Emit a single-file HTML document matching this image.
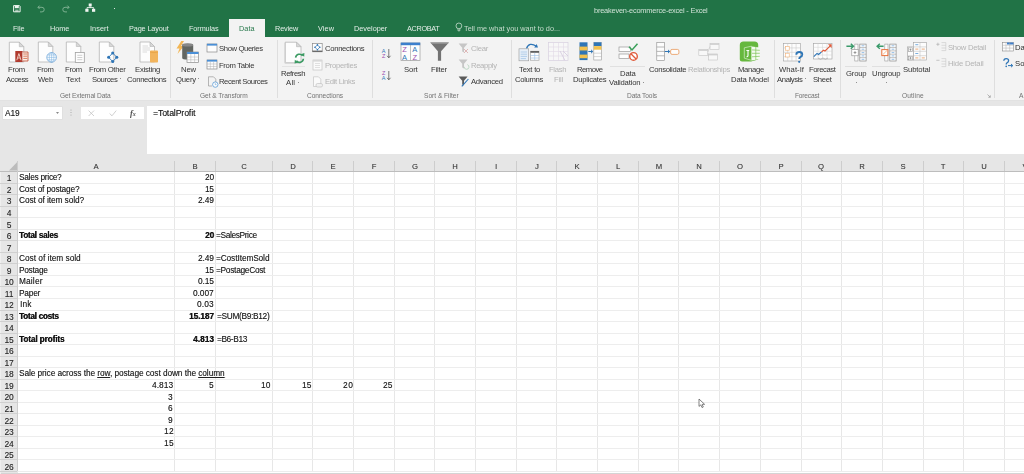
<!DOCTYPE html>
<html><head><meta charset="utf-8"><style>
html,body{margin:0;padding:0;width:1024px;height:474px;overflow:hidden;background:#fff;}
body{position:relative;font-family:'Liberation Sans', sans-serif;}
.t{position:absolute;white-space:nowrap;line-height:1;will-change:transform;}
.r{position:absolute;}
.s{position:absolute;overflow:visible;}
</style></head><body>
<div class="r" style="left:0px;top:0px;width:1024px;height:36.5px;background:#217346;"></div>
<svg class="s" style="left:12.5px;top:5px" width="8" height="7.5" viewBox="0 0 8 7.5"><path d="M0.6 0.6 H6.4 L7.1 1.3 V6.8 H0.6 Z" fill="none" stroke="#eef4f0" stroke-width="1"/><rect x="1.8" y="0.6" width="4" height="2.6" fill="#eef4f0"/><rect x="2.2" y="4.6" width="3.4" height="2.2" fill="#eef4f0" opacity=".6"/></svg>
<svg class="s" style="left:37px;top:5px" width="8" height="8" viewBox="0 0 8 8"><path d="M1 2.3 H5 Q7.2 2.3 7.2 4.6 Q7.2 6.9 5 6.9 H3" fill="none" stroke="#84b597" stroke-width="0.9"/><path d="M2.6 0.6 L0.9 2.3 L2.6 4" fill="none" stroke="#84b597" stroke-width="0.9"/></svg>
<svg class="s" style="left:62px;top:5px" width="8" height="8" viewBox="0 0 8 8"><path d="M7 2.3 H3 Q0.8 2.3 0.8 4.6 Q0.8 6.9 3 6.9 H5" fill="none" stroke="#84b597" stroke-width="0.9"/><path d="M5.4 0.6 L7.1 2.3 L5.4 4" fill="none" stroke="#84b597" stroke-width="0.9"/></svg>
<svg class="s" style="left:85.2px;top:3.3px" width="10.5" height="9.5" viewBox="0 0 10.5 9.5"><rect x="3.7" y="0.5" width="3" height="3" fill="#f0f5f2"/><rect x="0.3" y="5.8" width="3.2" height="3" fill="#f0f5f2"/><rect x="7" y="5.8" width="3.2" height="3" fill="#f0f5f2"/><path d="M5.2 3.5 V5 M2 5.8 V4.6 H8.6 V5.8" stroke="#f0f5f2" stroke-width="0.9" fill="none"/></svg>
<div class="r" style="left:114.4px;top:8.1px;width:1.1px;height:1.1px;background:#dfe9e3;"></div>
<div class="t" style="left:593.90px;top:6.63px;font-size:7.4px;color:#cfe2d6;font-weight:normal;font-family:'Liberation Sans', sans-serif;letter-spacing:-0.195px;">breakeven-ecommerce-excel - Excel</div>
<div class="t" style="left:13.20px;top:24.85px;font-size:7.3px;color:#e4eee8;font-weight:normal;font-family:'Liberation Sans', sans-serif;letter-spacing:-0.091px;">File</div>
<div class="t" style="left:50.30px;top:24.85px;font-size:7.3px;color:#e4eee8;font-weight:normal;font-family:'Liberation Sans', sans-serif;letter-spacing:-0.017px;">Home</div>
<div class="t" style="left:90.30px;top:24.85px;font-size:7.3px;color:#e4eee8;font-weight:normal;font-family:'Liberation Sans', sans-serif;letter-spacing:0.075px;">Insert</div>
<div class="t" style="left:129.20px;top:24.85px;font-size:7.3px;color:#e4eee8;font-weight:normal;font-family:'Liberation Sans', sans-serif;letter-spacing:-0.126px;">Page Layout</div>
<div class="t" style="left:189.30px;top:24.85px;font-size:7.3px;color:#e4eee8;font-weight:normal;font-family:'Liberation Sans', sans-serif;letter-spacing:-0.103px;">Formulas</div>
<div class="t" style="left:275.20px;top:24.85px;font-size:7.3px;color:#e4eee8;font-weight:normal;font-family:'Liberation Sans', sans-serif;letter-spacing:-0.123px;">Review</div>
<div class="t" style="left:318.20px;top:24.85px;font-size:7.3px;color:#e4eee8;font-weight:normal;font-family:'Liberation Sans', sans-serif;letter-spacing:0.078px;">View</div>
<div class="t" style="left:354.30px;top:24.85px;font-size:7.3px;color:#e4eee8;font-weight:normal;font-family:'Liberation Sans', sans-serif;letter-spacing:0.004px;">Developer</div>
<div class="t" style="left:407.40px;top:24.85px;font-size:7.3px;color:#e4eee8;font-weight:normal;font-family:'Liberation Sans', sans-serif;letter-spacing:-0.319px;">ACROBAT</div>
<div class="r" style="left:229px;top:19px;width:36px;height:18px;background:#f3f3f3;"></div>
<div class="t" style="left:239.20px;top:24.85px;font-size:7.3px;color:#2a7a4e;font-weight:normal;font-family:'Liberation Sans', sans-serif;letter-spacing:0.045px;">Data</div>
<svg class="s" style="left:455px;top:21.5px" width="8" height="11" viewBox="0 0 8 11"><circle cx="3.9" cy="3.9" r="2.9" fill="none" stroke="#c6dccd" stroke-width="0.8"/><path d="M3 6.6 V8.8 H4.8 V6.6" fill="none" stroke="#c6dccd" stroke-width="0.8"/></svg>
<div class="t" style="left:464.20px;top:24.85px;font-size:7.3px;color:#c6dccd;font-weight:normal;font-family:'Liberation Sans', sans-serif;letter-spacing:-0.004px;">Tell me what you want to do...</div>
<div class="r" style="left:0px;top:36.5px;width:1024px;height:63.5px;background:#f3f3f3;"></div>
<div class="r" style="left:0px;top:100px;width:1024px;height:55px;background:#e6e6e6;"></div>
<div class="r" style="left:0px;top:99.6px;width:1024px;height:0.6px;background:#e2e2e2;"></div>
<div class="r" style="left:170.2px;top:40px;width:0.9px;height:58px;background:#dedede;"></div>
<div class="r" style="left:276.7px;top:40px;width:0.9px;height:58px;background:#dedede;"></div>
<div class="r" style="left:372.2px;top:40px;width:0.9px;height:58px;background:#dedede;"></div>
<div class="r" style="left:511.4px;top:40px;width:0.9px;height:58px;background:#dedede;"></div>
<div class="r" style="left:773.6px;top:40px;width:0.9px;height:58px;background:#dedede;"></div>
<div class="r" style="left:839.5px;top:40px;width:0.9px;height:58px;background:#dedede;"></div>
<div class="r" style="left:994.3px;top:40px;width:0.9px;height:58px;background:#dedede;"></div>
<div class="t" style="left:59.80px;top:93.14px;font-size:6.6px;color:#727272;font-weight:normal;font-family:'Liberation Sans', sans-serif;letter-spacing:-0.113px;">Get External Data</div>
<div class="t" style="left:199.60px;top:93.14px;font-size:6.6px;color:#727272;font-weight:normal;font-family:'Liberation Sans', sans-serif;letter-spacing:-0.045px;">Get &amp; Transform</div>
<div class="t" style="left:306.50px;top:93.14px;font-size:6.6px;color:#727272;font-weight:normal;font-family:'Liberation Sans', sans-serif;letter-spacing:-0.060px;">Connections</div>
<div class="t" style="left:424.40px;top:93.14px;font-size:6.6px;color:#727272;font-weight:normal;font-family:'Liberation Sans', sans-serif;letter-spacing:-0.009px;">Sort &amp; Filter</div>
<div class="t" style="left:627.00px;top:93.14px;font-size:6.6px;color:#727272;font-weight:normal;font-family:'Liberation Sans', sans-serif;letter-spacing:-0.105px;">Data Tools</div>
<div class="t" style="left:794.50px;top:93.14px;font-size:6.6px;color:#727272;font-weight:normal;font-family:'Liberation Sans', sans-serif;letter-spacing:-0.182px;">Forecast</div>
<div class="t" style="left:901.70px;top:93.14px;font-size:6.6px;color:#727272;font-weight:normal;font-family:'Liberation Sans', sans-serif;letter-spacing:0.128px;">Outline</div>
<div class="t" style="left:1019.30px;top:93.14px;font-size:6.6px;color:#727272;font-weight:normal;font-family:'Liberation Sans', sans-serif;letter-spacing:0.000px;">A</div>
<svg class="s" style="left:8px;top:41px" width="22" height="23" viewBox="0 0 22 23"><path d="M1.3 1.2 H11.3 L15.8 5.7 V21.0 H1.3 Z" fill="#fdfdfd" stroke="#b4b4b4" stroke-width="0.8"/><path d="M11.3 1.2 V5.7 H15.8 Z" fill="#d8d8d8" stroke="#b4b4b4" stroke-width="0.6"/><rect x="7.3" y="10" width="7.3" height="11" fill="#b03a2e"/><path d="M14.6 11 H20 V20 H14.6" fill="#fbeee8" stroke="#c0492f" stroke-width="0.8"/><path d="M15.3 13 H19.3 M15.3 15.2 H19.3 M15.3 17.4 H19.3" stroke="#d0603a" stroke-width="0.8"/><path d="M8.8 19.2 L10.9 12.6 L13 19.2 M9.6 17 H12.2" fill="none" stroke="#f3d6cc" stroke-width="0.9"/></svg>
<div class="t" style="left:8.40px;top:65.80px;font-size:7.7px;color:#353535;font-weight:normal;font-family:'Liberation Sans', sans-serif;letter-spacing:-0.284px;">From</div>
<div class="t" style="left:5.50px;top:76.00px;font-size:7.7px;color:#353535;font-weight:normal;font-family:'Liberation Sans', sans-serif;letter-spacing:-0.414px;">Access</div>
<svg class="s" style="left:37px;top:41px" width="22" height="23" viewBox="0 0 22 23"><path d="M1.3 1 H11.3 L15.8 5.5 V21 H1.3 Z" fill="#fdfdfd" stroke="#b4b4b4" stroke-width="0.8"/><path d="M11.3 1 V5.5 H15.8 Z" fill="#d8d8d8" stroke="#b4b4b4" stroke-width="0.6"/><circle cx="14.6" cy="16.4" r="4.8" fill="#fbfdff" stroke="#5b9bd5" stroke-width="0.7"/><path d="M9.8 16.4 H19.4 M14.6 11.6 V21.2 M10.5 14 H18.7 M10.5 18.8 H18.7" stroke="#6aa5dc" stroke-width="0.45"/><ellipse cx="14.6" cy="16.4" rx="2.3" ry="4.8" fill="none" stroke="#6aa5dc" stroke-width="0.45"/></svg>
<div class="t" style="left:37.10px;top:65.80px;font-size:7.7px;color:#353535;font-weight:normal;font-family:'Liberation Sans', sans-serif;letter-spacing:-0.359px;">From</div>
<div class="t" style="left:38.00px;top:76.00px;font-size:7.7px;color:#353535;font-weight:normal;font-family:'Liberation Sans', sans-serif;letter-spacing:-0.257px;">Web</div>
<svg class="s" style="left:65px;top:41px" width="22" height="23" viewBox="0 0 22 23"><path d="M1.3 1 H11.3 L15.8 5.5 V21 H1.3 Z" fill="#fdfdfd" stroke="#b4b4b4" stroke-width="0.8"/><path d="M11.3 1 V5.5 H15.8 Z" fill="#d8d8d8" stroke="#b4b4b4" stroke-width="0.6"/><rect x="10.3" y="11.5" width="9" height="10" fill="#fdfdfd" stroke="#a0a0a0" stroke-width="0.8"/><path d="M12.3 14.3 H17.3 M12.3 16.5 H17.3 M12.3 18.7 H17.3" stroke="#b0b0b0" stroke-width="0.6"/></svg>
<div class="t" style="left:65.20px;top:65.80px;font-size:7.7px;color:#353535;font-weight:normal;font-family:'Liberation Sans', sans-serif;letter-spacing:-0.284px;">From</div>
<div class="t" style="left:65.80px;top:76.00px;font-size:7.7px;color:#353535;font-weight:normal;font-family:'Liberation Sans', sans-serif;letter-spacing:0.073px;">Text</div>
<svg class="s" style="left:98px;top:41px" width="22" height="23" viewBox="0 0 22 23"><path d="M1.3 1 H11.3 L15.8 5.5 V21 H1.3 Z" fill="#fdfdfd" stroke="#b4b4b4" stroke-width="0.8"/><path d="M11.3 1 V5.5 H15.8 Z" fill="#d8d8d8" stroke="#b4b4b4" stroke-width="0.6"/><path d="M14.7 12 L18.8 16.3 L14.7 20.6 L10.6 16.3 Z" fill="none" stroke="#2e75b6" stroke-width="0.9"/><circle cx="14.7" cy="12" r="1.5" fill="#2e75b6"/><circle cx="18.8" cy="16.3" r="1.5" fill="#2e75b6"/><circle cx="14.7" cy="20.6" r="1.5" fill="#2e75b6"/><circle cx="10.6" cy="16.3" r="1.5" fill="#2e75b6"/></svg>
<div class="t" style="left:88.80px;top:65.80px;font-size:7.7px;color:#353535;font-weight:normal;font-family:'Liberation Sans', sans-serif;letter-spacing:-0.281px;">From Other</div>
<div class="t" style="left:92.10px;top:76.00px;font-size:7.7px;color:#353535;font-weight:normal;font-family:'Liberation Sans', sans-serif;letter-spacing:-0.400px;">Sources</div>
<div class="r" style="left:120.2px;top:78.1px;width:1.3px;height:1.3px;background:#707070;border-radius:1px"></div>
<svg class="s" style="left:139px;top:41px" width="22" height="23" viewBox="0 0 22 23"><path d="M1 1 H11.0 L15.5 5.5 V21 H1 Z" fill="#fdfdfd" stroke="#b4b4b4" stroke-width="0.8"/><path d="M11.0 1 V5.5 H15.5 Z" fill="#d8d8d8" stroke="#b4b4b4" stroke-width="0.6"/><path d="M3.5 5 H9 M3.5 7 H11 M3.5 9 H11 M3.5 11 H8" stroke="#c8c8c8" stroke-width="0.6"/><rect x="11" y="9.5" width="8" height="12" rx="0.8" fill="#f2b45c"/><path d="M11 11 Q15 12.3 19 11" fill="none" stroke="#e39a3a" stroke-width="0.6"/></svg>
<div class="t" style="left:134.50px;top:65.80px;font-size:7.7px;color:#353535;font-weight:normal;font-family:'Liberation Sans', sans-serif;letter-spacing:-0.240px;">Existing</div>
<div class="t" style="left:127.40px;top:76.00px;font-size:7.7px;color:#353535;font-weight:normal;font-family:'Liberation Sans', sans-serif;letter-spacing:-0.314px;">Connections</div>
<svg class="s" style="left:175px;top:40px" width="25" height="24" viewBox="0 0 25 24"><path d="M6.3 1 L1.5 8.5 L4.5 8.5 L2.5 14 L9 6 L6 6 L9 1 Z" fill="#f2b655"/><path d="M7.2 5 Q7.2 3.6 12.7 3.6 Q18.2 3.6 18.2 5 V18 Q18.2 19.6 12.7 19.6 Q7.2 19.6 7.2 18 Z" fill="#626662"/><ellipse cx="12.7" cy="5" rx="5.5" ry="1.5" fill="#888"/><rect x="12" y="12" width="11.5" height="10.5" fill="#fdfdfd" stroke="#8a8a8a" stroke-width="0.7"/><rect x="12" y="12" width="11.5" height="2" fill="#4a8fd6"/><path d="M12 17 H23.5 M12 19.8 H23.5 M15.8 14 V22.5 M19.6 14 V22.5" stroke="#b0b0b0" stroke-width="0.5"/></svg>
<div class="t" style="left:180.50px;top:65.80px;font-size:7.7px;color:#353535;font-weight:normal;font-family:'Liberation Sans', sans-serif;letter-spacing:-0.164px;">New</div>
<div class="t" style="left:175.50px;top:76.00px;font-size:7.7px;color:#353535;font-weight:normal;font-family:'Liberation Sans', sans-serif;letter-spacing:-0.207px;">Query</div>
<div class="r" style="left:197.6px;top:78.2px;width:1.3px;height:1.3px;background:#707070;border-radius:1px"></div>
<svg class="s" style="left:206px;top:42.5px" width="12" height="10" viewBox="0 0 12 10"><rect x="1" y="1" width="10" height="8" fill="#fdfdfd" stroke="#8a8a8a" stroke-width="0.7"/><rect x="1" y="0.8" width="10" height="1.8" fill="#4a8fd6"/></svg>
<div class="t" style="left:219.30px;top:45.40px;font-size:7.7px;color:#353535;font-weight:normal;font-family:'Liberation Sans', sans-serif;letter-spacing:-0.383px;">Show Queries</div>
<svg class="s" style="left:206px;top:58.5px" width="12" height="11" viewBox="0 0 12 11"><rect x="1" y="1" width="10" height="9" fill="#fdfdfd" stroke="#8a8a8a" stroke-width="0.7"/><rect x="1" y="0.8" width="10" height="1.8" fill="#4a8fd6"/><path d="M1 5 H11 M1 7.5 H11 M4.3 2.6 V10 M7.6 2.6 V10" stroke="#b0b0b0" stroke-width="0.5"/></svg>
<div class="t" style="left:219.30px;top:61.90px;font-size:7.7px;color:#353535;font-weight:normal;font-family:'Liberation Sans', sans-serif;letter-spacing:-0.321px;">From Table</div>
<svg class="s" style="left:207px;top:75.5px" width="12" height="12" viewBox="0 0 12 12"><path d="M1.5 0.8 H6.5 L8.8 3.1 V6.3" fill="none" stroke="#9a9a9a" stroke-width="0.7"/><path d="M1.5 0.8 V10 H5" fill="none" stroke="#9a9a9a" stroke-width="0.7"/><circle cx="8.3" cy="8.6" r="2.7" fill="#fdfdfd" stroke="#5b9bd5" stroke-width="0.8"/><path d="M8.3 7.2 V8.7 H9.5" stroke="#5b9bd5" stroke-width="0.6" fill="none"/></svg>
<div class="t" style="left:219.40px;top:78.40px;font-size:7.7px;color:#353535;font-weight:normal;font-family:'Liberation Sans', sans-serif;letter-spacing:-0.450px;">Recent Sources</div>
<svg class="s" style="left:284px;top:41px" width="22" height="24" viewBox="0 0 22 24"><path d="M1.2 1.2 H12.5 L17.0 5.7 V21.8 H1.2 Z" fill="#fdfdfd" stroke="#b4b4b4" stroke-width="0.8"/><path d="M12.5 1.2 V5.7 H17.0 Z" fill="#d8d8d8" stroke="#b4b4b4" stroke-width="0.6"/><path d="M1.2 2 V21.8 H15" fill="none" stroke="#cfcfcf" stroke-width="1.2"/><path d="M11.6 16.6 A3.9 3.9 0 0 1 18.6 14.8" fill="none" stroke="#3a9a62" stroke-width="1.6"/><path d="M19.4 17.8 A3.9 3.9 0 0 1 12.4 19.8" fill="none" stroke="#3a9a62" stroke-width="1.6"/><path d="M16.8 13.2 L20.2 15.8 L20.4 12 Z M14.2 21.4 L10.8 18.8 L10.6 22.6 Z" fill="#3a9a62"/></svg>
<div class="r" style="left:282px;top:66px;width:23px;height:0.8px;background:#e4e4e4;"></div>
<div class="t" style="left:281.40px;top:69.80px;font-size:7.7px;color:#353535;font-weight:normal;font-family:'Liberation Sans', sans-serif;letter-spacing:-0.403px;">Refresh</div>
<div class="t" style="left:286.20px;top:79.30px;font-size:7.7px;color:#353535;font-weight:normal;font-family:'Liberation Sans', sans-serif;letter-spacing:0.251px;">All</div>
<div class="r" style="left:297.9px;top:81.6px;width:1.3px;height:1.3px;background:#707070;border-radius:1px"></div>
<svg class="s" style="left:311.8px;top:42.8px" width="11" height="10" viewBox="0 0 11 10"><rect x="0.6" y="0.6" width="9.6" height="7.4" fill="#fdfdfd" stroke="#8a8a8a" stroke-width="0.7"/><rect x="0.3" y="7.8" width="10.2" height="1.3" fill="#6a6a6a"/><path d="M5.4 1.9 L7.8 4.3 L5.4 6.7 L3 4.3 Z" fill="none" stroke="#2e75b6" stroke-width="0.7"/><circle cx="5.4" cy="1.9" r=".8" fill="#2e75b6"/><circle cx="7.8" cy="4.3" r=".8" fill="#2e75b6"/><circle cx="5.4" cy="6.7" r=".8" fill="#2e75b6"/><circle cx="3" cy="4.3" r=".8" fill="#2e75b6"/></svg>
<div class="t" style="left:324.50px;top:45.40px;font-size:7.7px;color:#353535;font-weight:normal;font-family:'Liberation Sans', sans-serif;letter-spacing:-0.314px;">Connections</div>
<svg class="s" style="left:312px;top:58.5px" width="11" height="12" viewBox="0 0 11 12"><rect x="1" y="1" width="9" height="10" fill="#fafafa" stroke="#c4c4c4" stroke-width="0.7"/><rect x="1" y="1" width="9" height="1.6" fill="#d8d8d8"/><path d="M3 4.5 H8 M3 6.5 H8 M3 8.5 H8" stroke="#cfcfcf" stroke-width="0.6"/></svg>
<div class="t" style="left:324.50px;top:61.90px;font-size:7.7px;color:#b4b4b4;font-weight:normal;font-family:'Liberation Sans', sans-serif;letter-spacing:-0.305px;">Properties</div>
<svg class="s" style="left:312px;top:75.5px" width="12" height="12" viewBox="0 0 12 12"><path d="M1.5 0.8 H6.5 L8.8 3.1 V10.5 H1.5 Z" fill="#fafafa" stroke="#c4c4c4" stroke-width="0.7"/><rect x="4" y="7.5" width="6.5" height="3.5" rx="1.5" fill="#f0f0f0" stroke="#bcbcbc" stroke-width="0.6"/></svg>
<div class="t" style="left:324.50px;top:78.40px;font-size:7.7px;color:#b4b4b4;font-weight:normal;font-family:'Liberation Sans', sans-serif;letter-spacing:-0.334px;">Edit Links</div>
<svg class="s" style="left:381px;top:48px" width="12" height="11" viewBox="0 0 12 11"><text x="0.8" y="5" font-size="5.5" fill="#2e75b6" font-family="Liberation Sans">A</text><text x="1" y="10" font-size="5.5" fill="#9b4fb0" font-family="Liberation Sans">Z</text><path d="M7.8 1 V9.6 M6.1 7.8 L7.8 9.8 L9.5 7.8" fill="none" stroke="#555" stroke-width="0.8"/></svg>
<svg class="s" style="left:381px;top:69.5px" width="12" height="11" viewBox="0 0 12 11"><text x="1" y="5" font-size="5.5" fill="#9b4fb0" font-family="Liberation Sans">Z</text><text x="0.8" y="10" font-size="5.5" fill="#2e75b6" font-family="Liberation Sans">A</text><path d="M7.8 1 V9.6 M6.1 7.8 L7.8 9.8 L9.5 7.8" fill="none" stroke="#555" stroke-width="0.8"/></svg>
<svg class="s" style="left:400px;top:42px" width="21" height="19" viewBox="0 0 21 19"><rect x="1" y="1" width="19" height="17.5" fill="#fdfdfd" stroke="#9a9a9a" stroke-width="0.7"/><rect x="0.8" y="0.6" width="19.4" height="2.6" fill="#3d7fcc"/><path d="M10.5 3 V18.5" stroke="#9a9a9a" stroke-width="0.6"/><text x="2.2" y="10" font-size="7.5" fill="#9b4fb0" font-family="Liberation Sans">Z</text><text x="2" y="17.5" font-size="7.5" fill="#2e75b6" font-family="Liberation Sans">A</text><text x="12.2" y="10" font-size="7.5" fill="#2e75b6" font-family="Liberation Sans">A</text><text x="12.6" y="17.5" font-size="7.5" fill="#9b4fb0" font-family="Liberation Sans">Z</text></svg>
<div class="t" style="left:403.50px;top:65.80px;font-size:7.7px;color:#353535;font-weight:normal;font-family:'Liberation Sans', sans-serif;letter-spacing:-0.127px;">Sort</div>
<svg class="s" style="left:429.5px;top:41.8px" width="20" height="20" viewBox="0 0 20 20"><path d="M0.3 0.4 H18.9 L11.1 9.3 V18.8 L7.9 18.8 V9.3 Z" fill="#737373"/><path d="M0.3 0.4 H18.9 L17.8 1.8 H1.4 Z" fill="#9a9a9a"/></svg>
<div class="t" style="left:431.00px;top:65.80px;font-size:7.7px;color:#353535;font-weight:normal;font-family:'Liberation Sans', sans-serif;letter-spacing:-0.182px;">Filter</div>
<svg class="s" style="left:458px;top:42.5px" width="11" height="11" viewBox="0 0 11 11"><path d="M0.6 0.5 H9.6 L6 4.8 V9.5 L4.2 8.6 V4.8 Z" fill="#c6c6c6"/><path d="M6 6 L10 10 M10 6 L6 10" stroke="#d8a8a8" stroke-width="0.8"/></svg>
<div class="t" style="left:470.50px;top:45.40px;font-size:7.7px;color:#b4b4b4;font-weight:normal;font-family:'Liberation Sans', sans-serif;letter-spacing:-0.295px;">Clear</div>
<svg class="s" style="left:458px;top:58.5px" width="11" height="12" viewBox="0 0 11 12"><path d="M0.6 0.5 H9.6 L6 4.8 V9.5 L4.2 8.6 V4.8 Z" fill="#c6c6c6"/><path d="M6.2 7.8 A2.4 2.4 0 1 0 9.3 5.6" fill="none" stroke="#b8d4bf" stroke-width="0.9"/></svg>
<div class="t" style="left:470.50px;top:61.90px;font-size:7.7px;color:#b4b4b4;font-weight:normal;font-family:'Liberation Sans', sans-serif;letter-spacing:-0.360px;">Reapply</div>
<svg class="s" style="left:458px;top:75.5px" width="11" height="11" viewBox="0 0 11 11"><path d="M0.6 0.5 H9.6 L6 4.8 V9.5 L4.2 8.6 V4.8 Z" fill="#5a5a5a"/><path d="M3.8 10.3 L10.4 3" stroke="#2e75b6" stroke-width="1.1"/></svg>
<div class="t" style="left:470.50px;top:78.40px;font-size:7.7px;color:#353535;font-weight:normal;font-family:'Liberation Sans', sans-serif;letter-spacing:-0.300px;">Advanced</div>
<svg class="s" style="left:518px;top:41.5px" width="23" height="20" viewBox="0 0 23 20"><path d="M8.5 6.5 Q11 -0.5 18.5 4.2" fill="none" stroke="#2e75b6" stroke-width="1.3"/><path d="M16.2 5.6 L20 5.6 L18.7 1.9 Z" fill="#2e75b6"/><rect x="1" y="6.8" width="9.7" height="12" fill="#e6eff8" stroke="#9a9a9a" stroke-width="0.6"/><path d="M2.7 10 H9 M2.7 12.2 H9 M2.7 14.4 H9 M2.7 16.6 H8" stroke="#9cc0e4" stroke-width="0.7"/><rect x="12.5" y="9.2" width="8.5" height="9" fill="#fdfdfd" stroke="#9a9a9a" stroke-width="0.6"/><rect x="12.5" y="9" width="8.5" height="1.8" fill="#606060"/><path d="M12.5 13.5 H21 M12.5 16 H21 M16.7 10.8 V18.2" stroke="#9cc0e4" stroke-width="0.6"/></svg>
<div class="t" style="left:518.60px;top:65.80px;font-size:7.7px;color:#353535;font-weight:normal;font-family:'Liberation Sans', sans-serif;letter-spacing:-0.208px;">Text to</div>
<div class="t" style="left:514.60px;top:76.00px;font-size:7.7px;color:#353535;font-weight:normal;font-family:'Liberation Sans', sans-serif;letter-spacing:-0.321px;">Columns</div>
<svg class="s" style="left:548px;top:42px" width="21" height="19" viewBox="0 0 21 19"><rect x="0.5" y="0.5" width="19.5" height="18" fill="#f7f7f7" stroke="#d8d0e0" stroke-width="0.7"/><path d="M0.5 5 H20 M0.5 9.5 H20 M0.5 14 H20 M5.5 0.5 V18.5 M10.5 0.5 V18.5 M15.5 0.5 V18.5" stroke="#e0d8e6" stroke-width="0.6"/><path d="M12 9 L17 18.5 M15 9 L20 14" stroke="#d6cde0" stroke-width="0.9"/></svg>
<div class="t" style="left:549.30px;top:65.80px;font-size:7.7px;color:#b4b4b4;font-weight:normal;font-family:'Liberation Sans', sans-serif;letter-spacing:-0.322px;">Flash</div>
<div class="t" style="left:553.50px;top:76.00px;font-size:7.7px;color:#b4b4b4;font-weight:normal;font-family:'Liberation Sans', sans-serif;letter-spacing:-0.207px;">Fill</div>
<svg class="s" style="left:578.5px;top:42.3px" width="23" height="18.5" viewBox="0 0 23 18.5"><rect x="0.5" y="0.3" width="8" height="17.8" fill="#2e75b6"/><rect x="0.5" y="4.6" width="8" height="3.6" fill="#f2c14e"/><rect x="0.5" y="12.6" width="8" height="3.6" fill="#f2c14e"/><path d="M0.5 8.6 H8.5" stroke="#f2c14e" stroke-width="0.4"/><rect x="14.8" y="0.6" width="7.6" height="17.4" fill="#fdfdfd" stroke="#9a9a9a" stroke-width="0.6"/><rect x="14.8" y="0.3" width="7.6" height="3.8" fill="#2e75b6"/><rect x="14.8" y="4.1" width="7.6" height="3.6" fill="#f2c14e"/><path d="M14.8 11.2 H22.4 M14.8 14.6 H22.4" stroke="#b0b0b0" stroke-width="0.5"/><path d="M9.3 9.5 H13.5 M12 7.8 L13.8 9.5 L12 11.2" fill="none" stroke="#2e75b6" stroke-width="1"/></svg>
<div class="t" style="left:577.20px;top:65.80px;font-size:7.7px;color:#353535;font-weight:normal;font-family:'Liberation Sans', sans-serif;letter-spacing:-0.507px;">Remove</div>
<div class="t" style="left:573.20px;top:76.00px;font-size:7.7px;color:#353535;font-weight:normal;font-family:'Liberation Sans', sans-serif;letter-spacing:-0.261px;">Duplicates</div>
<svg class="s" style="left:617.5px;top:42.5px" width="21" height="19" viewBox="0 0 21 19"><rect x="1" y="4" width="11.5" height="4.5" fill="#fdfdfd" stroke="#8a8a8a" stroke-width="0.6"/><rect x="1" y="11" width="10" height="4.5" fill="#fdfdfd" stroke="#8a8a8a" stroke-width="0.6"/><path d="M11 3.8 L14 7 L19.5 0.7" fill="none" stroke="#3aa05a" stroke-width="1.5"/><circle cx="15.5" cy="13.4" r="3.8" fill="#fff" stroke="#e05a3a" stroke-width="1.4"/><path d="M12.9 10.8 L18.1 16" stroke="#e05a3a" stroke-width="1.3"/></svg>
<div class="r" style="left:610.3px;top:66.0px;width:34.5px;height:0.8px;background:#e0e0e0;"></div>
<div class="t" style="left:619.70px;top:69.80px;font-size:7.7px;color:#353535;font-weight:normal;font-family:'Liberation Sans', sans-serif;letter-spacing:-0.163px;">Data</div>
<div class="t" style="left:609.10px;top:79.30px;font-size:7.7px;color:#353535;font-weight:normal;font-family:'Liberation Sans', sans-serif;letter-spacing:-0.180px;">Validation</div>
<div class="r" style="left:643px;top:82.2px;width:1.3px;height:1.3px;background:#707070;border-radius:1px"></div>
<svg class="s" style="left:655.5px;top:41.5px" width="24" height="19" viewBox="0 0 24 19"><rect x="0.8" y="0.5" width="7.5" height="17.8" fill="#fdfdfd" stroke="#8a8a8a" stroke-width="0.6"/><path d="M0.8 5 H8.3 M0.8 9.4 H8.3 M0.8 13.8 H8.3" stroke="#8a8a8a" stroke-width="0.6"/><path d="M8.7 9.5 H13.5 M12 7.9 L13.7 9.5 L12 11.1" fill="none" stroke="#2e75b6" stroke-width="1"/><rect x="14.6" y="7.4" width="8.3" height="5" rx="1.5" fill="#fdfdfd" stroke="#e8985a" stroke-width="0.8"/></svg>
<div class="t" style="left:648.50px;top:65.80px;font-size:7.7px;color:#353535;font-weight:normal;font-family:'Liberation Sans', sans-serif;letter-spacing:-0.310px;">Consolidate</div>
<svg class="s" style="left:697.5px;top:42.5px" width="22" height="18" viewBox="0 0 22 18"><rect x="12" y="0.5" width="9" height="6" fill="#f8f8f8" stroke="#c4c4c4" stroke-width="0.6"/><rect x="12" y="0.5" width="9" height="1.4" fill="#d0d0d0"/><rect x="0.8" y="6.5" width="9" height="6" fill="#f8f8f8" stroke="#c4c4c4" stroke-width="0.6"/><rect x="0.8" y="6.5" width="9" height="1.4" fill="#d0d0d0"/><rect x="10.5" y="11" width="9" height="6" fill="#f8f8f8" stroke="#c4c4c4" stroke-width="0.6"/><rect x="10.5" y="11" width="9" height="1.4" fill="#d0d0d0"/><path d="M9.8 9 L12 3.5 M9.8 10 L10.5 13.5" stroke="#c4c4c4" stroke-width="0.6"/></svg>
<div class="t" style="left:687.50px;top:65.80px;font-size:7.7px;color:#b4b4b4;font-weight:normal;font-family:'Liberation Sans', sans-serif;letter-spacing:-0.327px;">Relationships</div>
<svg class="s" style="left:739px;top:41px" width="22" height="21" viewBox="0 0 22 21"><path d="M0.8 4 Q0.8 0.4 4.5 0.4 H15.5 Q19.2 0.4 19.2 4 V18.5 L12 20.6 H3 Q0.8 20.6 0.8 18.5 Z" fill="#66b83e"/><path d="M12.8 5.6 L20.8 6.4 V18 L12.8 19.6 Z" fill="#f4faf0"/><path d="M12.8 8.9 L20.8 9.3 M12.8 12.3 L20.8 12.3 M12.8 15.8 L20.8 15.3 M16.8 6 V18.8" stroke="#7cc456" stroke-width="0.7"/><path d="M5.3 6.8 L12.5 5.2 V19.3 L5.3 17.2 Z" fill="none" stroke="#e8f5e0" stroke-width="0.6"/><path d="M7.4 9.5 H10.2 M9 9.5 V14.2 Q9 16 7.6 15.6" fill="none" stroke="#fff" stroke-width="1.1"/></svg>
<div class="t" style="left:737.50px;top:65.80px;font-size:7.7px;color:#353535;font-weight:normal;font-family:'Liberation Sans', sans-serif;letter-spacing:-0.297px;">Manage</div>
<div class="t" style="left:731.30px;top:76.00px;font-size:7.7px;color:#353535;font-weight:normal;font-family:'Liberation Sans', sans-serif;letter-spacing:-0.141px;">Data Model</div>
<svg class="s" style="left:783px;top:42.5px" width="21" height="21" viewBox="0 0 21 21"><rect x="0.5" y="0.5" width="17" height="17.5" fill="#fdfdfd" stroke="#a0a0a0" stroke-width="0.6"/><path d="M0.5 4.9 H17.5 M0.5 9.3 H17.5 M0.5 13.7 H17.5 M4.7 0.5 V18 M8.9 0.5 V18 M13.1 0.5 V18" stroke="#c4c4c4" stroke-width="0.5"/><rect x="2.6" y="3.4" width="3.6" height="3.8" fill="#fff" stroke="#f0a868" stroke-width="0.55"/><rect x="2.6" y="10.2" width="3.6" height="3.8" fill="#fff" stroke="#f0a868" stroke-width="0.55"/><path d="M13.3 11.7 Q13.3 9 16.3 9 Q19.3 9 19.3 11.5 Q19.3 13.4 17.2 14.2 Q16.2 14.6 16.2 16" fill="none" stroke="#2e75b6" stroke-width="1.8"/><circle cx="16.2" cy="18.8" r="1.1" fill="#2e75b6"/></svg>
<div class="t" style="left:779.40px;top:65.80px;font-size:7.7px;color:#353535;font-weight:normal;font-family:'Liberation Sans', sans-serif;letter-spacing:0.031px;">What-If</div>
<div class="t" style="left:777.00px;top:76.00px;font-size:7.7px;color:#353535;font-weight:normal;font-family:'Liberation Sans', sans-serif;letter-spacing:-0.380px;">Analysis</div>
<div class="r" style="left:805.1px;top:78.2px;width:1.3px;height:1.3px;background:#707070;border-radius:1px"></div>
<svg class="s" style="left:812.5px;top:42.8px" width="20" height="18" viewBox="0 0 20 18"><rect x="0.5" y="0.5" width="18.5" height="15.5" fill="#fdfdfd" stroke="#a0a0a0" stroke-width="0.6"/><path d="M0.5 4.3 H19 M0.5 8.2 H19 M0.5 12 H19 M5 0.5 V16 M9.5 0.5 V16 M14 0.5 V16" stroke="#d0d0d0" stroke-width="0.5"/><path d="M0.8 13.6 L4 10.4 L5.5 11.5 L8.5 9" fill="none" stroke="#2e75b6" stroke-width="1.1"/><path d="M8.5 9 L10.5 7.2 L12 8 L17.8 2.4" fill="none" stroke="#e05a3a" stroke-width="1.1"/><path d="M15 1.3 H18.6 V4.9 Z" fill="#e05a3a"/><path d="M5 15 Q7.5 17.5 10 15 Q12.5 17.5 15 15" fill="none" stroke="#a0a0a0" stroke-width="0.6"/></svg>
<div class="t" style="left:809.10px;top:65.80px;font-size:7.7px;color:#353535;font-weight:normal;font-family:'Liberation Sans', sans-serif;letter-spacing:-0.426px;">Forecast</div>
<div class="t" style="left:813.10px;top:76.00px;font-size:7.7px;color:#353535;font-weight:normal;font-family:'Liberation Sans', sans-serif;letter-spacing:-0.319px;">Sheet</div>
<svg class="s" style="left:845.5px;top:42.8px" width="21" height="20" viewBox="0 0 21 20"><rect x="8.8" y="1.1" width="3.2" height="16.9" fill="#fdfdfd" stroke="#9a9a9a" stroke-width="0.6"/><rect x="13.8" y="1.1" width="6.3" height="16.9" fill="#fdfdfd" stroke="#8a8a8a" stroke-width="0.7"/><path d="M13.8 4.5 H20.1 M13.8 7.9 H20.1 M13.8 11.2 H20.1 M13.8 14.6 H20.1" stroke="#8a8a8a" stroke-width="0.5"/><path d="M15.6 2.8 H18.3 M15.6 6.2 H18.3 M15.6 9.6 H18.3 M15.6 12.9 H18.3 M15.6 16.3 H18.3" stroke="#6aa5dc" stroke-width="0.7"/><rect x="5.8" y="6.3" width="6.4" height="6.5" fill="#fff" stroke="#8a8a8a" stroke-width="0.6"/><path d="M7.6 9.55 H10.4 M9 8.1 V11" stroke="#666" stroke-width="0.6"/><path d="M0.4 3.3 H7.4 M4.8 0.8 L7.5 3.3 L4.8 5.8" fill="none" stroke="#3a9a6a" stroke-width="1.4"/></svg>
<div class="r" style="left:845.2px;top:66.4px;width:22.2px;height:0.8px;background:#e0e0e0;"></div>
<div class="t" style="left:846.10px;top:69.80px;font-size:7.7px;color:#353535;font-weight:normal;font-family:'Liberation Sans', sans-serif;letter-spacing:-0.195px;">Group</div>
<div class="r" style="left:856px;top:81.6px;width:1.3px;height:1.3px;background:#707070;border-radius:1px"></div>
<svg class="s" style="left:875.5px;top:42.8px" width="21" height="20" viewBox="0 0 21 20"><rect x="8.8" y="1.1" width="3.2" height="16.9" fill="#fdfdfd" stroke="#9a9a9a" stroke-width="0.6"/><rect x="13.8" y="1.1" width="6.3" height="16.9" fill="#fdfdfd" stroke="#8a8a8a" stroke-width="0.7"/><path d="M13.8 4.5 H20.1 M13.8 7.9 H20.1 M13.8 11.2 H20.1 M13.8 14.6 H20.1" stroke="#8a8a8a" stroke-width="0.5"/><path d="M15.6 2.8 H18.3 M15.6 6.2 H18.3 M15.6 9.6 H18.3 M15.6 12.9 H18.3 M15.6 16.3 H18.3" stroke="#6aa5dc" stroke-width="0.7"/><rect x="5.8" y="6.6" width="6.1" height="6" fill="#fff" stroke="#e8703a" stroke-width="1"/><path d="M6.6 11.8 L11.1 7.4" stroke="#f0a060" stroke-width="0.7"/><path d="M7.6 3.3 H1.2 M3.8 0.8 L1.1 3.3 L3.8 5.8" fill="none" stroke="#3a9a6a" stroke-width="1.4"/></svg>
<div class="r" style="left:872.4px;top:66.4px;width:27.3px;height:0.8px;background:#e0e0e0;"></div>
<div class="t" style="left:871.90px;top:69.80px;font-size:7.7px;color:#353535;font-weight:normal;font-family:'Liberation Sans', sans-serif;letter-spacing:-0.171px;">Ungroup</div>
<div class="r" style="left:885.9px;top:81.6px;width:1.3px;height:1.3px;background:#707070;border-radius:1px"></div>
<svg class="s" style="left:906.5px;top:42.3px" width="20" height="19" viewBox="0 0 20 19"><rect x="6.5" y="0.5" width="13" height="17.5" fill="#fdfdfd" stroke="#a0a0a0" stroke-width="0.6"/><rect x="0.5" y="4.9" width="6" height="13.1" fill="#fdfdfd" stroke="#a0a0a0" stroke-width="0.6"/><path d="M0.5 9.3 H19.5 M6.5 4.9 H19.5 M0.5 13.7 H19.5 M13 0.5 V18" stroke="#b8b8b8" stroke-width="0.5"/><rect x="1.7" y="5.9" width="3.6" height="3.6" fill="#fff" stroke="#8a8a8a" stroke-width="0.5"/><rect x="1.7" y="14.3" width="3.6" height="3.6" fill="#fff" stroke="#8a8a8a" stroke-width="0.5"/><path d="M2.4 7.7 H4.6 M3.5 6.6 V8.8 M2.4 16.1 H4.6 M3.5 15 V17.2" stroke="#666" stroke-width="0.5"/><path d="M8.3 2.7 H11.3 M8.3 11.5 H11.3" stroke="#5b9bd5" stroke-width="0.8"/><path d="M8.3 7.1 H11.3 M14.7 7.1 H17.8 M8.3 15.9 H11.3 M14.7 15.9 H17.8" stroke="#e8985a" stroke-width="0.8"/></svg>
<div class="t" style="left:902.70px;top:65.80px;font-size:7.7px;color:#353535;font-weight:normal;font-family:'Liberation Sans', sans-serif;letter-spacing:-0.127px;">Subtotal</div>
<svg class="s" style="left:935.5px;top:42.3px" width="11" height="10" viewBox="0 0 11 10"><path d="M0.3 2.3 H3.5 M1.9 0.7 V3.9" stroke="#b0b0b0" stroke-width="0.7"/><path d="M5.5 0.6 H9.8 V8.6 H5.5 M5.5 3.3 H9.8 M5.5 6 H9.8" fill="none" stroke="#c8c8c8" stroke-width="0.6"/></svg>
<div class="t" style="left:948.30px;top:44.10px;font-size:7.7px;color:#b4b4b4;font-weight:normal;font-family:'Liberation Sans', sans-serif;letter-spacing:-0.276px;">Show Detail</div>
<svg class="s" style="left:935.5px;top:58px" width="11" height="10" viewBox="0 0 11 10"><path d="M0.3 2.3 H3.5" stroke="#b0b0b0" stroke-width="0.7"/><path d="M5.5 0.6 H9.8 V8.6 H5.5 M5.5 3.3 H9.8 M5.5 6 H9.8" fill="none" stroke="#c8c8c8" stroke-width="0.6"/></svg>
<div class="t" style="left:948.30px;top:59.90px;font-size:7.7px;color:#b4b4b4;font-weight:normal;font-family:'Liberation Sans', sans-serif;letter-spacing:-0.201px;">Hide Detail</div>
<svg class="s" style="left:986.5px;top:93.8px" width="4" height="4" viewBox="0 0 4 4"><path d="M0.5 0.5 L3.2 3.2 M3.3 1.3 V3.3 H1.3" stroke="#8a8a8a" stroke-width="0.6" fill="none"/></svg>
<svg class="s" style="left:1002px;top:42px" width="12" height="10" viewBox="0 0 12 10"><rect x="0.5" y="0.5" width="11" height="8.5" fill="#fdfdfd" stroke="#8a8a8a" stroke-width="0.6"/><rect x="5" y="0.5" width="6.5" height="2" fill="#3d7fcc"/><path d="M0.5 3.3 H11.5 M0.5 6.1 H11.5 M4 0.5 V9 M7.7 0.5 V9" stroke="#b0b0b0" stroke-width="0.5"/></svg>
<div class="t" style="left:1015.00px;top:44.10px;font-size:7.7px;color:#2f2f2f;font-weight:normal;font-family:'Liberation Sans', sans-serif;letter-spacing:0.000px;">Da</div>
<svg class="s" style="left:1003px;top:58px" width="11" height="10" viewBox="0 0 11 10"><path d="M0.8 2.8 Q0.8 0.6 3.2 0.6 Q5.6 0.6 5.6 2.7 Q5.6 4 4 4.8 Q3.2 5.3 3.2 6.4" fill="none" stroke="#2e75b6" stroke-width="1.3"/><circle cx="3.2" cy="8.4" r=".8" fill="#2e75b6"/><path d="M5 7.6 H9.6 M8 6 L9.8 7.6 L8 9.2" fill="none" stroke="#2e75b6" stroke-width="1"/></svg>
<div class="t" style="left:1015.00px;top:59.90px;font-size:7.7px;color:#2f2f2f;font-weight:normal;font-family:'Liberation Sans', sans-serif;letter-spacing:0.000px;">Sol</div>
<div class="r" style="left:2.9px;top:106.8px;width:59.5px;height:12.6px;background:#fff;box-shadow:0 0 0 0.6px #dcdcdc"></div>
<div class="t" style="left:5.10px;top:109.73px;font-size:8.2px;color:#262626;font-weight:normal;font-family:'Liberation Sans', sans-serif;letter-spacing:-0.059px;text-shadow:0.25px 0 0 rgba(40,40,40,.5)">A19</div>
<svg class="s" style="left:56px;top:112px" width="3" height="2" viewBox="0 0 3 2"><path d="M0 0 H3 L1.5 2 Z" fill="#8a8a8a"/></svg>
<svg class="s" style="left:70.3px;top:109px" width="2" height="8" viewBox="0 0 2 8"><circle cx="1" cy="1" r=".5" fill="#9a9a9a"/><circle cx="1" cy="3.5" r=".5" fill="#9a9a9a"/><circle cx="1" cy="6" r=".5" fill="#9a9a9a"/></svg>
<div class="r" style="left:81px;top:106.6px;width:63.3px;height:12.3px;background:#fff;"></div>
<svg class="s" style="left:87.5px;top:110px" width="7" height="7" viewBox="0 0 7 7"><path d="M0.6 0.6 L6 6 M6 0.6 L0.6 6" stroke="#c4c4c4" stroke-width="0.8"/></svg>
<svg class="s" style="left:109px;top:110.3px" width="8" height="7" viewBox="0 0 8 7"><path d="M0.6 3.5 L3 5.8 L7.2 0.6" fill="none" stroke="#c4c4c4" stroke-width="0.8"/></svg>
<div class="t" style="left:130px;top:109px;font-size:8.5px;color:#505050;font-family:'Liberation Serif',serif;font-style:italic;font-weight:bold">f<span style="font-size:6px">x</span></div>
<div class="r" style="left:146.7px;top:106.2px;width:877.3px;height:47.8px;background:#fff;"></div>
<div class="t" style="left:152.50px;top:109.28px;font-size:8.6px;color:#1f1f1f;font-weight:normal;font-family:'Liberation Sans', sans-serif;letter-spacing:-0.078px;text-shadow:0.25px 0 0 rgba(30,30,30,.55)">=TotalProfit</div>
<div class="r" style="left:0px;top:154.3px;width:1024px;height:17px;background:#e6e6e6;"></div>
<div class="r" style="left:0px;top:171px;width:17.5px;height:303px;background:#e6e6e6;"></div>
<div class="r" style="left:18px;top:172px;width:1006px;height:300.6px;background:#fff;"></div>
<div class="r" style="left:0px;top:472.6px;width:1024px;height:1.4px;background:#d4d4d4;"></div>
<div class="r" style="left:0px;top:171px;width:1.2px;height:303px;background:#efefef;"></div>
<div class="r" style="left:174px;top:172px;width:1px;height:299px;background:#e7e7e7"></div>
<div class="r" style="left:215px;top:172px;width:1px;height:299px;background:#e7e7e7"></div>
<div class="r" style="left:272px;top:172px;width:1px;height:299px;background:#e7e7e7"></div>
<div class="r" style="left:312px;top:172px;width:1px;height:299px;background:#e7e7e7"></div>
<div class="r" style="left:353px;top:172px;width:1px;height:299px;background:#e7e7e7"></div>
<div class="r" style="left:394px;top:172px;width:1px;height:299px;background:#e7e7e7"></div>
<div class="r" style="left:434px;top:172px;width:1px;height:299px;background:#e7e7e7"></div>
<div class="r" style="left:475px;top:172px;width:1px;height:299px;background:#e7e7e7"></div>
<div class="r" style="left:516px;top:172px;width:1px;height:299px;background:#e7e7e7"></div>
<div class="r" style="left:556px;top:172px;width:1px;height:299px;background:#e7e7e7"></div>
<div class="r" style="left:597px;top:172px;width:1px;height:299px;background:#e7e7e7"></div>
<div class="r" style="left:638px;top:172px;width:1px;height:299px;background:#e7e7e7"></div>
<div class="r" style="left:678px;top:172px;width:1px;height:299px;background:#e7e7e7"></div>
<div class="r" style="left:719px;top:172px;width:1px;height:299px;background:#e7e7e7"></div>
<div class="r" style="left:760px;top:172px;width:1px;height:299px;background:#e7e7e7"></div>
<div class="r" style="left:801px;top:172px;width:1px;height:299px;background:#e7e7e7"></div>
<div class="r" style="left:841px;top:172px;width:1px;height:299px;background:#e7e7e7"></div>
<div class="r" style="left:882px;top:172px;width:1px;height:299px;background:#e7e7e7"></div>
<div class="r" style="left:923px;top:172px;width:1px;height:299px;background:#e7e7e7"></div>
<div class="r" style="left:963px;top:172px;width:1px;height:299px;background:#e7e7e7"></div>
<div class="r" style="left:1004px;top:172px;width:1px;height:299px;background:#e7e7e7"></div>
<div class="r" style="left:1045px;top:172px;width:1px;height:299px;background:#e7e7e7"></div>
<div class="r" style="left:18px;top:183px;width:1006px;height:1px;background:#ededed"></div>
<div class="r" style="left:18px;top:194px;width:1006px;height:1px;background:#ededed"></div>
<div class="r" style="left:18px;top:206px;width:1006px;height:1px;background:#ededed"></div>
<div class="r" style="left:18px;top:217px;width:1006px;height:1px;background:#ededed"></div>
<div class="r" style="left:18px;top:229px;width:1006px;height:1px;background:#ededed"></div>
<div class="r" style="left:18px;top:240px;width:1006px;height:1px;background:#ededed"></div>
<div class="r" style="left:18px;top:252px;width:1006px;height:1px;background:#ededed"></div>
<div class="r" style="left:18px;top:263px;width:1006px;height:1px;background:#ededed"></div>
<div class="r" style="left:18px;top:275px;width:1006px;height:1px;background:#ededed"></div>
<div class="r" style="left:18px;top:286px;width:1006px;height:1px;background:#ededed"></div>
<div class="r" style="left:18px;top:298px;width:1006px;height:1px;background:#ededed"></div>
<div class="r" style="left:18px;top:310px;width:1006px;height:1px;background:#ededed"></div>
<div class="r" style="left:18px;top:321px;width:1006px;height:1px;background:#ededed"></div>
<div class="r" style="left:18px;top:333px;width:1006px;height:1px;background:#ededed"></div>
<div class="r" style="left:18px;top:344px;width:1006px;height:1px;background:#ededed"></div>
<div class="r" style="left:18px;top:356px;width:1006px;height:1px;background:#ededed"></div>
<div class="r" style="left:18px;top:367px;width:1006px;height:1px;background:#ededed"></div>
<div class="r" style="left:18px;top:379px;width:1006px;height:1px;background:#ededed"></div>
<div class="r" style="left:18px;top:390px;width:1006px;height:1px;background:#ededed"></div>
<div class="r" style="left:18px;top:402px;width:1006px;height:1px;background:#ededed"></div>
<div class="r" style="left:18px;top:413px;width:1006px;height:1px;background:#ededed"></div>
<div class="r" style="left:18px;top:425px;width:1006px;height:1px;background:#ededed"></div>
<div class="r" style="left:18px;top:436px;width:1006px;height:1px;background:#ededed"></div>
<div class="r" style="left:18px;top:448px;width:1006px;height:1px;background:#ededed"></div>
<div class="r" style="left:18px;top:459px;width:1006px;height:1px;background:#ededed"></div>
<div class="r" style="left:18px;top:471px;width:1006px;height:1px;background:#ededed"></div>
<div class="r" style="left:174px;top:161px;width:1px;height:10px;background:#cdcdcd"></div>
<div class="r" style="left:215px;top:161px;width:1px;height:10px;background:#cdcdcd"></div>
<div class="r" style="left:272px;top:161px;width:1px;height:10px;background:#cdcdcd"></div>
<div class="r" style="left:312px;top:161px;width:1px;height:10px;background:#cdcdcd"></div>
<div class="r" style="left:353px;top:161px;width:1px;height:10px;background:#cdcdcd"></div>
<div class="r" style="left:394px;top:161px;width:1px;height:10px;background:#cdcdcd"></div>
<div class="r" style="left:434px;top:161px;width:1px;height:10px;background:#cdcdcd"></div>
<div class="r" style="left:475px;top:161px;width:1px;height:10px;background:#cdcdcd"></div>
<div class="r" style="left:516px;top:161px;width:1px;height:10px;background:#cdcdcd"></div>
<div class="r" style="left:556px;top:161px;width:1px;height:10px;background:#cdcdcd"></div>
<div class="r" style="left:597px;top:161px;width:1px;height:10px;background:#cdcdcd"></div>
<div class="r" style="left:638px;top:161px;width:1px;height:10px;background:#cdcdcd"></div>
<div class="r" style="left:678px;top:161px;width:1px;height:10px;background:#cdcdcd"></div>
<div class="r" style="left:719px;top:161px;width:1px;height:10px;background:#cdcdcd"></div>
<div class="r" style="left:760px;top:161px;width:1px;height:10px;background:#cdcdcd"></div>
<div class="r" style="left:801px;top:161px;width:1px;height:10px;background:#cdcdcd"></div>
<div class="r" style="left:841px;top:161px;width:1px;height:10px;background:#cdcdcd"></div>
<div class="r" style="left:882px;top:161px;width:1px;height:10px;background:#cdcdcd"></div>
<div class="r" style="left:923px;top:161px;width:1px;height:10px;background:#cdcdcd"></div>
<div class="r" style="left:963px;top:161px;width:1px;height:10px;background:#cdcdcd"></div>
<div class="r" style="left:1004px;top:161px;width:1px;height:10px;background:#cdcdcd"></div>
<div class="r" style="left:1045px;top:161px;width:1px;height:10px;background:#cdcdcd"></div>
<div class="r" style="left:0px;top:171px;width:1024px;height:1px;background:#bdbdbd"></div>
<div class="r" style="left:17px;top:161px;width:1px;height:310px;background:#cdcdcd"></div>
<div class="r" style="left:0px;top:183px;width:17px;height:1px;background:#d0d0d0"></div>
<div class="r" style="left:0px;top:194px;width:17px;height:1px;background:#d0d0d0"></div>
<div class="r" style="left:0px;top:206px;width:17px;height:1px;background:#d0d0d0"></div>
<div class="r" style="left:0px;top:217px;width:17px;height:1px;background:#d0d0d0"></div>
<div class="r" style="left:0px;top:229px;width:17px;height:1px;background:#d0d0d0"></div>
<div class="r" style="left:0px;top:240px;width:17px;height:1px;background:#d0d0d0"></div>
<div class="r" style="left:0px;top:252px;width:17px;height:1px;background:#d0d0d0"></div>
<div class="r" style="left:0px;top:263px;width:17px;height:1px;background:#d0d0d0"></div>
<div class="r" style="left:0px;top:275px;width:17px;height:1px;background:#d0d0d0"></div>
<div class="r" style="left:0px;top:286px;width:17px;height:1px;background:#d0d0d0"></div>
<div class="r" style="left:0px;top:298px;width:17px;height:1px;background:#d0d0d0"></div>
<div class="r" style="left:0px;top:310px;width:17px;height:1px;background:#d0d0d0"></div>
<div class="r" style="left:0px;top:321px;width:17px;height:1px;background:#d0d0d0"></div>
<div class="r" style="left:0px;top:333px;width:17px;height:1px;background:#d0d0d0"></div>
<div class="r" style="left:0px;top:344px;width:17px;height:1px;background:#d0d0d0"></div>
<div class="r" style="left:0px;top:356px;width:17px;height:1px;background:#d0d0d0"></div>
<div class="r" style="left:0px;top:367px;width:17px;height:1px;background:#d0d0d0"></div>
<div class="r" style="left:0px;top:379px;width:17px;height:1px;background:#d0d0d0"></div>
<div class="r" style="left:0px;top:390px;width:17px;height:1px;background:#d0d0d0"></div>
<div class="r" style="left:0px;top:402px;width:17px;height:1px;background:#d0d0d0"></div>
<div class="r" style="left:0px;top:413px;width:17px;height:1px;background:#d0d0d0"></div>
<div class="r" style="left:0px;top:425px;width:17px;height:1px;background:#d0d0d0"></div>
<div class="r" style="left:0px;top:436px;width:17px;height:1px;background:#d0d0d0"></div>
<div class="r" style="left:0px;top:448px;width:17px;height:1px;background:#d0d0d0"></div>
<div class="r" style="left:0px;top:459px;width:17px;height:1px;background:#d0d0d0"></div>
<div class="r" style="left:0px;top:471px;width:17px;height:1px;background:#d0d0d0"></div>
<svg class="s" style="left:0px;top:0px" width="1024" height="474" viewBox="0 0 1024 474"><path d="M9 170.4 L17 170.4 L17 162.2 Z" fill="#bcbcbc"/></svg>
<div class="t" style="left:46.15px;width:100px;text-align:center;top:162.51px;font-size:7.6px;color:#404040;text-shadow:0.25px 0 0 rgba(60,60,60,.45)">A</div>
<div class="t" style="left:144.75px;width:100px;text-align:center;top:162.51px;font-size:7.6px;color:#404040;text-shadow:0.25px 0 0 rgba(60,60,60,.45)">B</div>
<div class="t" style="left:193.70px;width:100px;text-align:center;top:162.51px;font-size:7.6px;color:#404040;text-shadow:0.25px 0 0 rgba(60,60,60,.45)">C</div>
<div class="t" style="left:242.54px;width:100px;text-align:center;top:162.51px;font-size:7.6px;color:#404040;text-shadow:0.25px 0 0 rgba(60,60,60,.45)">D</div>
<div class="t" style="left:283.22px;width:100px;text-align:center;top:162.51px;font-size:7.6px;color:#404040;text-shadow:0.25px 0 0 rgba(60,60,60,.45)">E</div>
<div class="t" style="left:323.90px;width:100px;text-align:center;top:162.51px;font-size:7.6px;color:#404040;text-shadow:0.25px 0 0 rgba(60,60,60,.45)">F</div>
<div class="t" style="left:364.58px;width:100px;text-align:center;top:162.51px;font-size:7.6px;color:#404040;text-shadow:0.25px 0 0 rgba(60,60,60,.45)">G</div>
<div class="t" style="left:405.26px;width:100px;text-align:center;top:162.51px;font-size:7.6px;color:#404040;text-shadow:0.25px 0 0 rgba(60,60,60,.45)">H</div>
<div class="t" style="left:445.94px;width:100px;text-align:center;top:162.51px;font-size:7.6px;color:#404040;text-shadow:0.25px 0 0 rgba(60,60,60,.45)">I</div>
<div class="t" style="left:486.62px;width:100px;text-align:center;top:162.51px;font-size:7.6px;color:#404040;text-shadow:0.25px 0 0 rgba(60,60,60,.45)">J</div>
<div class="t" style="left:527.30px;width:100px;text-align:center;top:162.51px;font-size:7.6px;color:#404040;text-shadow:0.25px 0 0 rgba(60,60,60,.45)">K</div>
<div class="t" style="left:567.98px;width:100px;text-align:center;top:162.51px;font-size:7.6px;color:#404040;text-shadow:0.25px 0 0 rgba(60,60,60,.45)">L</div>
<div class="t" style="left:608.66px;width:100px;text-align:center;top:162.51px;font-size:7.6px;color:#404040;text-shadow:0.25px 0 0 rgba(60,60,60,.45)">M</div>
<div class="t" style="left:649.34px;width:100px;text-align:center;top:162.51px;font-size:7.6px;color:#404040;text-shadow:0.25px 0 0 rgba(60,60,60,.45)">N</div>
<div class="t" style="left:690.02px;width:100px;text-align:center;top:162.51px;font-size:7.6px;color:#404040;text-shadow:0.25px 0 0 rgba(60,60,60,.45)">O</div>
<div class="t" style="left:730.70px;width:100px;text-align:center;top:162.51px;font-size:7.6px;color:#404040;text-shadow:0.25px 0 0 rgba(60,60,60,.45)">P</div>
<div class="t" style="left:771.38px;width:100px;text-align:center;top:162.51px;font-size:7.6px;color:#404040;text-shadow:0.25px 0 0 rgba(60,60,60,.45)">Q</div>
<div class="t" style="left:812.06px;width:100px;text-align:center;top:162.51px;font-size:7.6px;color:#404040;text-shadow:0.25px 0 0 rgba(60,60,60,.45)">R</div>
<div class="t" style="left:852.74px;width:100px;text-align:center;top:162.51px;font-size:7.6px;color:#404040;text-shadow:0.25px 0 0 rgba(60,60,60,.45)">S</div>
<div class="t" style="left:893.42px;width:100px;text-align:center;top:162.51px;font-size:7.6px;color:#404040;text-shadow:0.25px 0 0 rgba(60,60,60,.45)">T</div>
<div class="t" style="left:934.10px;width:100px;text-align:center;top:162.51px;font-size:7.6px;color:#404040;text-shadow:0.25px 0 0 rgba(60,60,60,.45)">U</div>
<div class="t" style="left:974.78px;width:100px;text-align:center;top:162.51px;font-size:7.6px;color:#404040;text-shadow:0.25px 0 0 rgba(60,60,60,.45)">V</div>
<div class="t" style="left:-40.60px;width:100px;text-align:center;top:174.42px;font-size:8.3px;color:#2e2e2e;text-shadow:0.25px 0 0 rgba(50,50,50,.5)">1</div>
<div class="t" style="left:-40.60px;width:100px;text-align:center;top:185.95px;font-size:8.3px;color:#2e2e2e;text-shadow:0.25px 0 0 rgba(50,50,50,.5)">2</div>
<div class="t" style="left:-40.60px;width:100px;text-align:center;top:197.48px;font-size:8.3px;color:#2e2e2e;text-shadow:0.25px 0 0 rgba(50,50,50,.5)">3</div>
<div class="t" style="left:-40.60px;width:100px;text-align:center;top:209.01px;font-size:8.3px;color:#2e2e2e;text-shadow:0.25px 0 0 rgba(50,50,50,.5)">4</div>
<div class="t" style="left:-40.60px;width:100px;text-align:center;top:220.54px;font-size:8.3px;color:#2e2e2e;text-shadow:0.25px 0 0 rgba(50,50,50,.5)">5</div>
<div class="t" style="left:-40.60px;width:100px;text-align:center;top:232.07px;font-size:8.3px;color:#2e2e2e;text-shadow:0.25px 0 0 rgba(50,50,50,.5)">6</div>
<div class="t" style="left:-40.60px;width:100px;text-align:center;top:243.60px;font-size:8.3px;color:#2e2e2e;text-shadow:0.25px 0 0 rgba(50,50,50,.5)">7</div>
<div class="t" style="left:-40.60px;width:100px;text-align:center;top:255.13px;font-size:8.3px;color:#2e2e2e;text-shadow:0.25px 0 0 rgba(50,50,50,.5)">8</div>
<div class="t" style="left:-40.60px;width:100px;text-align:center;top:266.66px;font-size:8.3px;color:#2e2e2e;text-shadow:0.25px 0 0 rgba(50,50,50,.5)">9</div>
<div class="t" style="left:-40.60px;width:100px;text-align:center;top:278.19px;font-size:8.3px;color:#2e2e2e;text-shadow:0.25px 0 0 rgba(50,50,50,.5)">10</div>
<div class="t" style="left:-40.60px;width:100px;text-align:center;top:289.72px;font-size:8.3px;color:#2e2e2e;text-shadow:0.25px 0 0 rgba(50,50,50,.5)">11</div>
<div class="t" style="left:-40.60px;width:100px;text-align:center;top:301.25px;font-size:8.3px;color:#2e2e2e;text-shadow:0.25px 0 0 rgba(50,50,50,.5)">12</div>
<div class="t" style="left:-40.60px;width:100px;text-align:center;top:312.78px;font-size:8.3px;color:#2e2e2e;text-shadow:0.25px 0 0 rgba(50,50,50,.5)">13</div>
<div class="t" style="left:-40.60px;width:100px;text-align:center;top:324.31px;font-size:8.3px;color:#2e2e2e;text-shadow:0.25px 0 0 rgba(50,50,50,.5)">14</div>
<div class="t" style="left:-40.60px;width:100px;text-align:center;top:335.84px;font-size:8.3px;color:#2e2e2e;text-shadow:0.25px 0 0 rgba(50,50,50,.5)">15</div>
<div class="t" style="left:-40.60px;width:100px;text-align:center;top:347.37px;font-size:8.3px;color:#2e2e2e;text-shadow:0.25px 0 0 rgba(50,50,50,.5)">16</div>
<div class="t" style="left:-40.60px;width:100px;text-align:center;top:358.90px;font-size:8.3px;color:#2e2e2e;text-shadow:0.25px 0 0 rgba(50,50,50,.5)">17</div>
<div class="t" style="left:-40.60px;width:100px;text-align:center;top:370.43px;font-size:8.3px;color:#2e2e2e;text-shadow:0.25px 0 0 rgba(50,50,50,.5)">18</div>
<div class="t" style="left:-40.60px;width:100px;text-align:center;top:381.96px;font-size:8.3px;color:#2e2e2e;text-shadow:0.25px 0 0 rgba(50,50,50,.5)">19</div>
<div class="t" style="left:-40.60px;width:100px;text-align:center;top:393.49px;font-size:8.3px;color:#2e2e2e;text-shadow:0.25px 0 0 rgba(50,50,50,.5)">20</div>
<div class="t" style="left:-40.60px;width:100px;text-align:center;top:405.02px;font-size:8.3px;color:#2e2e2e;text-shadow:0.25px 0 0 rgba(50,50,50,.5)">21</div>
<div class="t" style="left:-40.60px;width:100px;text-align:center;top:416.55px;font-size:8.3px;color:#2e2e2e;text-shadow:0.25px 0 0 rgba(50,50,50,.5)">22</div>
<div class="t" style="left:-40.60px;width:100px;text-align:center;top:428.08px;font-size:8.3px;color:#2e2e2e;text-shadow:0.25px 0 0 rgba(50,50,50,.5)">23</div>
<div class="t" style="left:-40.60px;width:100px;text-align:center;top:439.61px;font-size:8.3px;color:#2e2e2e;text-shadow:0.25px 0 0 rgba(50,50,50,.5)">24</div>
<div class="t" style="left:-40.60px;width:100px;text-align:center;top:451.14px;font-size:8.3px;color:#2e2e2e;text-shadow:0.25px 0 0 rgba(50,50,50,.5)">25</div>
<div class="t" style="left:-40.60px;width:100px;text-align:center;top:462.67px;font-size:8.3px;color:#2e2e2e;text-shadow:0.25px 0 0 rgba(50,50,50,.5)">26</div>
<div class="t" style="left:19.44px;top:174.43px;font-size:8.2px;color:#1f1f1f;font-weight:normal;font-family:'Liberation Sans', sans-serif;letter-spacing:-0.217px;text-shadow:0.25px 0 0 rgba(30,30,30,.55)">Sales price?</div>
<div class="t" style="left:19.44px;top:185.96px;font-size:8.2px;color:#1f1f1f;font-weight:normal;font-family:'Liberation Sans', sans-serif;letter-spacing:-0.094px;text-shadow:0.25px 0 0 rgba(30,30,30,.55)">Cost of postage?</div>
<div class="t" style="left:19.44px;top:197.49px;font-size:8.2px;color:#1f1f1f;font-weight:normal;font-family:'Liberation Sans', sans-serif;letter-spacing:-0.026px;text-shadow:0.25px 0 0 rgba(30,30,30,.55)">Cost of item sold?</div>
<div class="t" style="left:19.30px;top:232.08px;font-size:8.2px;color:#111;font-weight:bold;font-family:'Liberation Sans', sans-serif;letter-spacing:-0.265px;text-shadow:0.4px 0 0 rgba(17,17,17,.8)">Total sales</div>
<div class="t" style="left:19.30px;top:255.14px;font-size:8.2px;color:#1f1f1f;font-weight:normal;font-family:'Liberation Sans', sans-serif;letter-spacing:0.042px;text-shadow:0.25px 0 0 rgba(30,30,30,.55)">Cost of item sold</div>
<div class="t" style="left:19.30px;top:266.67px;font-size:8.2px;color:#1f1f1f;font-weight:normal;font-family:'Liberation Sans', sans-serif;letter-spacing:-0.207px;text-shadow:0.25px 0 0 rgba(30,30,30,.55)">Postage</div>
<div class="t" style="left:19.30px;top:278.20px;font-size:8.2px;color:#1f1f1f;font-weight:normal;font-family:'Liberation Sans', sans-serif;letter-spacing:0.217px;text-shadow:0.25px 0 0 rgba(30,30,30,.55)">Mailer</div>
<div class="t" style="left:19.30px;top:289.73px;font-size:8.2px;color:#1f1f1f;font-weight:normal;font-family:'Liberation Sans', sans-serif;letter-spacing:-0.132px;text-shadow:0.25px 0 0 rgba(30,30,30,.55)">Paper</div>
<div class="t" style="left:19.50px;top:301.26px;font-size:8.2px;color:#1f1f1f;font-weight:normal;font-family:'Liberation Sans', sans-serif;letter-spacing:0.221px;text-shadow:0.25px 0 0 rgba(30,30,30,.55)">Ink</div>
<div class="t" style="left:19.30px;top:312.79px;font-size:8.2px;color:#111;font-weight:bold;font-family:'Liberation Sans', sans-serif;letter-spacing:-0.275px;text-shadow:0.4px 0 0 rgba(17,17,17,.8)">Total costs</div>
<div class="t" style="left:19.30px;top:335.85px;font-size:8.2px;color:#111;font-weight:bold;font-family:'Liberation Sans', sans-serif;letter-spacing:-0.100px;text-shadow:0.4px 0 0 rgba(17,17,17,.8)">Total profits</div>
<div class="t" style="left:19.30px;top:370.44px;font-size:8.2px;color:#1f1f1f;font-weight:normal;font-family:'Liberation Sans', sans-serif;letter-spacing:-0.021px;text-shadow:0.25px 0 0 rgba(30,30,30,.55)">Sale price across the <u>row</u>, postage cost down the <u>column</u></div>
<div class="t" style="left:204.50px;top:174.43px;font-size:8.2px;color:#1f1f1f;font-weight:normal;font-family:'Liberation Sans', sans-serif;letter-spacing:-0.055px;text-shadow:0.25px 0 0 rgba(30,30,30,.55)">20</div>
<div class="t" style="left:204.90px;top:185.96px;font-size:8.2px;color:#1f1f1f;font-weight:normal;font-family:'Liberation Sans', sans-serif;letter-spacing:-0.255px;text-shadow:0.25px 0 0 rgba(30,30,30,.55)">15</div>
<div class="t" style="left:197.90px;top:197.49px;font-size:8.2px;color:#1f1f1f;font-weight:normal;font-family:'Liberation Sans', sans-serif;letter-spacing:-0.084px;text-shadow:0.25px 0 0 rgba(30,30,30,.55)">2.49</div>
<div class="t" style="left:204.50px;top:232.08px;font-size:8.2px;color:#111;font-weight:bold;font-family:'Liberation Sans', sans-serif;letter-spacing:-0.055px;text-shadow:0.4px 0 0 rgba(17,17,17,.8)">20</div>
<div class="t" style="left:216.20px;top:232.08px;font-size:8.2px;color:#1f1f1f;font-weight:normal;font-family:'Liberation Sans', sans-serif;letter-spacing:-0.293px;text-shadow:0.25px 0 0 rgba(30,30,30,.55)">=SalesPrice</div>
<div class="t" style="left:197.90px;top:255.14px;font-size:8.2px;color:#1f1f1f;font-weight:normal;font-family:'Liberation Sans', sans-serif;letter-spacing:-0.084px;text-shadow:0.25px 0 0 rgba(30,30,30,.55)">2.49</div>
<div class="t" style="left:216.20px;top:255.14px;font-size:8.2px;color:#1f1f1f;font-weight:normal;font-family:'Liberation Sans', sans-serif;letter-spacing:-0.041px;text-shadow:0.25px 0 0 rgba(30,30,30,.55)">=CostItemSold</div>
<div class="t" style="left:204.90px;top:266.67px;font-size:8.2px;color:#1f1f1f;font-weight:normal;font-family:'Liberation Sans', sans-serif;letter-spacing:-0.255px;text-shadow:0.25px 0 0 rgba(30,30,30,.55)">15</div>
<div class="t" style="left:216.20px;top:266.67px;font-size:8.2px;color:#1f1f1f;font-weight:normal;font-family:'Liberation Sans', sans-serif;letter-spacing:-0.206px;text-shadow:0.25px 0 0 rgba(30,30,30,.55)">=PostageCost</div>
<div class="t" style="left:197.90px;top:278.20px;font-size:8.2px;color:#1f1f1f;font-weight:normal;font-family:'Liberation Sans', sans-serif;letter-spacing:-0.084px;text-shadow:0.25px 0 0 rgba(30,30,30,.55)">0.15</div>
<div class="t" style="left:193.30px;top:289.73px;font-size:8.2px;color:#1f1f1f;font-weight:normal;font-family:'Liberation Sans', sans-serif;letter-spacing:0.020px;text-shadow:0.25px 0 0 rgba(30,30,30,.55)">0.007</div>
<div class="t" style="left:197.30px;top:301.26px;font-size:8.2px;color:#1f1f1f;font-weight:normal;font-family:'Liberation Sans', sans-serif;letter-spacing:0.166px;text-shadow:0.25px 0 0 rgba(30,30,30,.55)">0.03</div>
<div class="t" style="left:189.10px;top:312.79px;font-size:8.2px;color:#111;font-weight:bold;font-family:'Liberation Sans', sans-serif;letter-spacing:-0.041px;text-shadow:0.4px 0 0 rgba(17,17,17,.8)">15.187</div>
<div class="t" style="left:216.60px;top:312.79px;font-size:8.2px;color:#1f1f1f;font-weight:normal;font-family:'Liberation Sans', sans-serif;letter-spacing:-0.241px;text-shadow:0.25px 0 0 rgba(30,30,30,.55)">=SUM(B9:B12)</div>
<div class="t" style="left:192.90px;top:335.85px;font-size:8.2px;color:#111;font-weight:bold;font-family:'Liberation Sans', sans-serif;letter-spacing:0.100px;text-shadow:0.4px 0 0 rgba(17,17,17,.8)">4.813</div>
<div class="t" style="left:216.60px;top:335.85px;font-size:8.2px;color:#1f1f1f;font-weight:normal;font-family:'Liberation Sans', sans-serif;letter-spacing:-0.313px;text-shadow:0.25px 0 0 rgba(30,30,30,.55)">=B6-B13</div>
<div class="t" style="left:152.30px;top:381.97px;font-size:8.2px;color:#1f1f1f;font-weight:normal;font-family:'Liberation Sans', sans-serif;letter-spacing:0.120px;text-shadow:0.25px 0 0 rgba(30,30,30,.55)">4.813</div>
<div class="t" style="left:208.50px;top:381.97px;font-size:8.2px;color:#1f1f1f;font-weight:normal;font-family:'Liberation Sans', sans-serif;letter-spacing:0.000px;text-shadow:0.25px 0 0 rgba(30,30,30,.55)">5</div>
<div class="t" style="left:261.40px;top:381.97px;font-size:8.2px;color:#1f1f1f;font-weight:normal;font-family:'Liberation Sans', sans-serif;letter-spacing:0.295px;text-shadow:0.25px 0 0 rgba(30,30,30,.55)">10</div>
<div class="t" style="left:302.00px;top:381.97px;font-size:8.2px;color:#1f1f1f;font-weight:normal;font-family:'Liberation Sans', sans-serif;letter-spacing:0.295px;text-shadow:0.25px 0 0 rgba(30,30,30,.55)">15</div>
<div class="t" style="left:342.60px;top:381.97px;font-size:8.2px;color:#1f1f1f;font-weight:normal;font-family:'Liberation Sans', sans-serif;letter-spacing:0.695px;text-shadow:0.25px 0 0 rgba(30,30,30,.55)">20</div>
<div class="t" style="left:383.30px;top:381.97px;font-size:8.2px;color:#1f1f1f;font-weight:normal;font-family:'Liberation Sans', sans-serif;letter-spacing:0.245px;text-shadow:0.25px 0 0 rgba(30,30,30,.55)">25</div>
<div class="t" style="left:168.20px;top:393.50px;font-size:8.2px;color:#1f1f1f;font-weight:normal;font-family:'Liberation Sans', sans-serif;letter-spacing:0.000px;text-shadow:0.25px 0 0 rgba(30,30,30,.55)">3</div>
<div class="t" style="left:168.20px;top:405.03px;font-size:8.2px;color:#1f1f1f;font-weight:normal;font-family:'Liberation Sans', sans-serif;letter-spacing:0.000px;text-shadow:0.25px 0 0 rgba(30,30,30,.55)">6</div>
<div class="t" style="left:168.20px;top:416.56px;font-size:8.2px;color:#1f1f1f;font-weight:normal;font-family:'Liberation Sans', sans-serif;letter-spacing:0.000px;text-shadow:0.25px 0 0 rgba(30,30,30,.55)">9</div>
<div class="t" style="left:163.60px;top:428.09px;font-size:8.2px;color:#1f1f1f;font-weight:normal;font-family:'Liberation Sans', sans-serif;letter-spacing:0.345px;text-shadow:0.25px 0 0 rgba(30,30,30,.55)">12</div>
<div class="t" style="left:163.60px;top:439.62px;font-size:8.2px;color:#1f1f1f;font-weight:normal;font-family:'Liberation Sans', sans-serif;letter-spacing:0.345px;text-shadow:0.25px 0 0 rgba(30,30,30,.55)">15</div>
<svg class="s" style="left:697.5px;top:398.3px" width="9" height="12" viewBox="0 0 9 12"><path d="M1 1 L1 8.4 L2.8 6.9 L4.1 9.6 L5.3 9 L4.1 6.4 L6.6 6.3 Z" fill="#fff" stroke="#5a5a5a" stroke-width="0.75" stroke-linejoin="round"/></svg>
</body></html>
